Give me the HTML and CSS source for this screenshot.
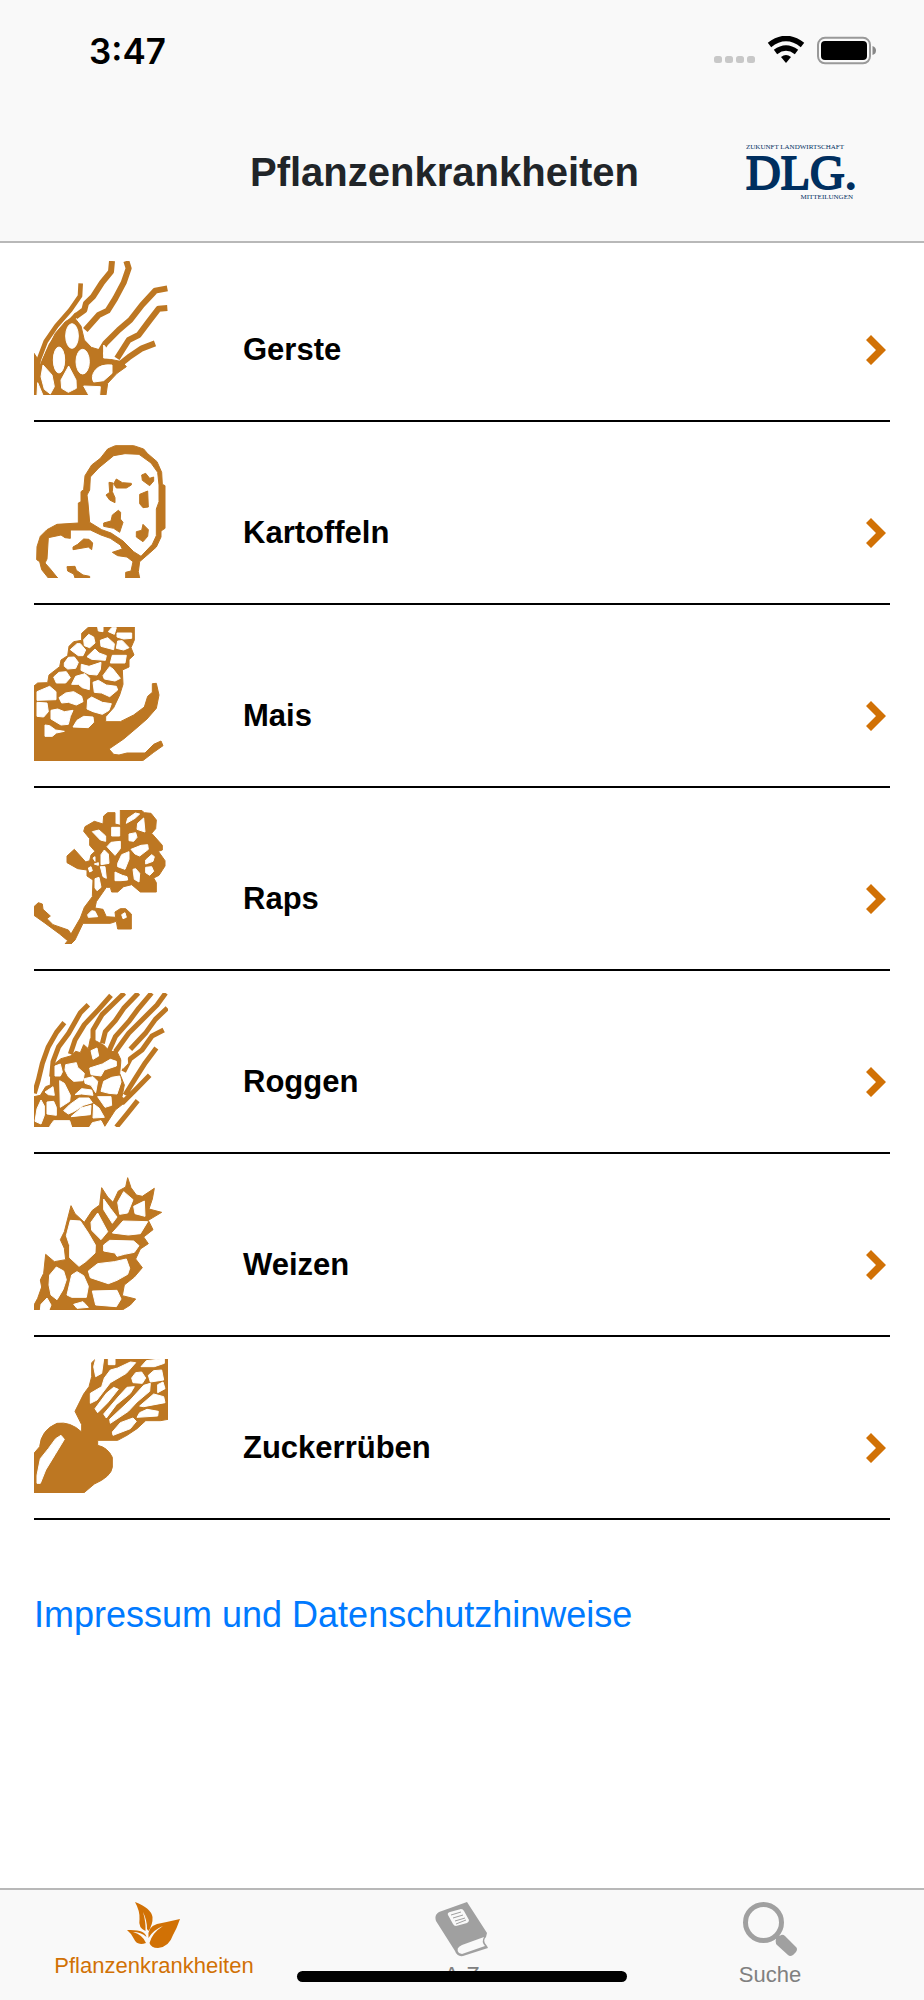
FILE: index.html
```html
<!DOCTYPE html>
<html lang="de">
<head>
<meta charset="utf-8">
<meta name="viewport" content="width=device-width, initial-scale=1">
<title>Pflanzenkrankheiten</title>
<link rel="stylesheet" href="styles.css">
</head>
<body>
<div class="app">
  <header class="header">
    <div class="status">
      <time class="clock">3:47</time>
      <svg class="status-icons" viewBox="0 0 164 30" aria-hidden="true">
        <g fill="#c8c8c8"><rect x="0" y="20" width="8" height="7" rx="2.5"/><rect x="11" y="20" width="8" height="7" rx="2.5"/><rect x="22" y="20" width="8" height="7" rx="2.5"/><rect x="33" y="20" width="8" height="7" rx="2.5"/></g>
        <g fill="none" stroke="#000" stroke-width="5.500"><path d="M55.500 9Q72 -4 88.500 9"/><path d="M61.500 16Q72 8 82.500 16"/></g>
        <path d="M67 21Q72 17 77 21L72 27Z"/>
        <rect x="104" y="1.800" width="52" height="25.500" rx="7" fill="none" stroke="#999" stroke-width="2"/>
        <rect x="107" y="5" width="46" height="19" rx="4"/>
        <path d="M158.500 10Q162 11 162 14.500Q162 18 158.500 19Z" fill="#888"/>
      </svg>
    </div>
    <div class="titlebar">
      <h1 class="title">Pflanzenkrankheiten</h1>
      <svg class="logo" viewBox="0 0 112 62" role="img" aria-label="DLG Mitteilungen">
        <text class="logo-small" x="1" y="8">ZUKUNFT LANDWIRTSCHAFT</text>
        <text class="logo-big" x="1" y="48">DLG.</text>
        <text class="logo-small" x="108" y="58" text-anchor="end">MITTEILUNGEN</text>
      </svg>
    </div>
  </header>

  <main class="content">
    <ul class="crops">
      <li><a class="crop" href="#gerste">
        <svg class="crop-icon" viewBox="41 33 402 402" aria-hidden="true">
          <g class="line">
            <path stroke-width="14" d="M181 100L179 138L150 180L108 228L76 275L55 330L46 400L70 436M170 192L120 245L92 285L70 335L58 400"/>
            <path stroke-width="18" d="M275 33L272 65L245 98L218 140L197 160L192 180L165 200M318 33L325 55L310 98L285 145L262 182L235 195L195 240M441 115L405 122L365 165L330 210L295 240L255 280L225 330M441 174L415 176L385 215L355 255L325 270L290 325M404 280L365 295L325 322L290 350"/>
          </g>
          <path class="fill" d="M160 200L182 228L192 270L213 292L240 300L255 325L305 335L318 350L290 370L262 400L257 435H41V310L48 320L58 350L80 300L105 250L135 215Z"/>
          <g class="hole"><ellipse cx="155" cy="258" rx="19" ry="37"/><ellipse cx="116" cy="330" rx="17" ry="39"/><ellipse cx="187" cy="335" rx="20" ry="37"/><path d="M145 348L167 390L168 415L144 427L124 415L122 390ZM68 345L95 375L102 410L90 432L72 418L62 380ZM52 398L68 436H50ZM225 360Q240 342 275 345L275 370L250 392L220 396Q210 380 225 360ZM190 408L240 410L238 435H205ZM250 285L262 298L285 300L275 325L250 324Z"/></g>
        </svg>
        <span class="crop-name">Gerste</span>
        <svg class="chevron" viewBox="0 0 20 30" aria-hidden="true"><path d="M5 0L20 15L5 30L0 25L10 15L0 5Z"/></svg>
      </a></li>
      <li><a class="crop" href="#kartoffeln">
        <svg class="crop-icon" viewBox="41 27 402 402" aria-hidden="true">
          <path class="fill" fill-rule="evenodd" d="M174 264V204L182 200V170L190 164L194 122L214 90L240 70L262 42L285 32H340L370 42L382 56L410 80L424 112L426 148L434 152V280L422 288V306L408 336L388 354L358 380L354 410L358 429H316V412L332 408L338 380L320 366L292 362L276 352L306 342L300 330L270 310L242 300L210 285H150V310L134 308L122 300L84 308L80 372L74 384L90 402L112 429H84L64 404L58 380L49 374L50 335L60 304L80 284L110 268ZM203 204L208 262L244 284L272 294L308 318L340 350L362 364L396 328L408 302V222L416 200V150L412 112L392 84L356 58L314 56L280 62L236 98L210 126L208 165L200 180Z"/>
          <path class="fill" d="M288 132L306 143L333 145V150L318 159H288L280 146ZM266 142L278 144L276 170L284 188V203L268 195L257 180L268 172ZM364 120L376 115L388 130L400 126V138L388 152L366 136ZM358 178L382 168L384 216L368 218L358 206ZM294 226L301 232L300 252L308 262L298 292L280 280L250 274V264L272 258L276 240ZM368 268L384 284L382 304L368 320L348 306V290L364 286ZM172 328L190 312L206 313L217 324L214 344L204 336L158 344V336ZM140 395L164 394L168 406L188 420L208 424V429H164L160 417L142 408Z"/>
        </svg>
        <span class="crop-name">Kartoffeln</span>
        <svg class="chevron" viewBox="0 0 20 30" aria-hidden="true"><path d="M5 0L20 15L5 30L0 25L10 15L0 5Z"/></svg>
      </a></li>
      <li><a class="crop" href="#mais">
        <svg class="crop-icon" viewBox="41 36 402 402" aria-hidden="true">
          <path class="fill" d="M41 213L52 204L82 203L86 180L118 155L122 135L142 122L146 94L160 80L184 76V55L205 36H342V75L332 98L341 120L326 134V156L306 165L308 208L298 240L280 278L256 305V320L300 320L340 300L372 276L382 244L396 232V206L408 205L416 240L408 280L380 312L350 338L310 372L266 402L280 418L296 420L320 414H374L400 388L422 378L428 392L400 412L366 438H41Z"/>
          <g class="hole"><path d="M50 230L88 214L107 230L107 254L50 256ZM50 262L80 264L84 290L70 306L50 304ZM100 186L116 172L138 170L150 188L136 204L108 204ZM132 144L144 127L162 126L174 142L166 160L142 162L132 154ZM150 104L170 86L180 86L196 105L188 122L174 122ZM190 74L205 58L220 66L224 84L208 98L192 92ZM232 36H248V50L234 48ZM240 76L262 68L282 86L280 104L242 94ZM292 78L306 77L326 98L310 105L288 100ZM290 66V54H334V70L310 72ZM274 38H288L282 58L264 50ZM200 125L224 102L236 114L258 122L255 136L214 133ZM270 144L276 121H318L314 144ZM183 148L206 154L242 142L240 164L230 180L206 178L182 166ZM248 182L268 155L278 162L300 190L284 198L252 192ZM166 184L194 176L208 190L207 224L186 218L174 208L154 208ZM218 202L234 196L258 210L288 214L292 225L268 245L244 234L222 232ZM116 248L136 234L160 230L184 244L188 260L168 270L144 262L124 264ZM202 254L214 246L246 262L273 266L266 286L246 298L218 290L200 282ZM92 286L112 282L132 290L158 286L150 304L144 328L122 330L92 312ZM158 336L170 316L190 304L218 306L220 322L204 338ZM74 330L88 332L106 345L132 349L108 354L96 364H74Z"/></g>
        </svg>
        <span class="crop-name">Mais</span>
        <svg class="chevron" viewBox="0 0 20 30" aria-hidden="true"><path d="M5 0L20 15L5 30L0 25L10 15L0 5Z"/></svg>
      </a></li>
      <li><a class="crop" href="#raps">
        <svg class="crop-icon" viewBox="41 30 402 402" aria-hidden="true">
          <path class="fill" d="M300 30H362L372 38L392 40L408 60L406 86L394 100L426 136V150L414 154L434 182V198L416 226L400 234L408 248V276H360L334 254L310 260L292 276H274L270 262L258 262L228 305L224 324L248 328L258 350L286 352L284 336L300 326H316L333 342V387H292L288 364L270 370H188L164 420L152 432H134L142 422L118 402L72 368L41 346V320L54 308L66 312L68 328L90 348L80 356L98 374L144 390L152 402L180 354L192 322L216 290L218 240L200 228V210L172 206L140 188V168L162 148L196 186L208 182L212 165L224 154L208 136V116L190 94L194 80L222 64L248 72L250 48L262 38H284V72L300 76Z"/>
          <g class="hole"><path d="M318 70L322 55L345 39L358 42L344 55ZM350 88L352 70L370 54L374 96ZM274 82H298V108H274ZM216 95L236 90L256 108V124L240 120ZM326 102L346 98L350 112L340 124L326 122ZM260 140L272 127L300 124L300 146L284 166ZM332 148L362 136L382 134L384 148L358 168L344 162ZM242 164L252 150L264 162L266 190L242 194ZM292 190L304 164L326 155L326 178L314 208L292 200ZM376 180L394 164L402 170L398 184L376 192ZM376 202L394 200L400 214L388 226L376 218ZM338 208L346 206L358 220L356 246L342 238ZM284 216L306 226L320 230L322 240L302 242H284ZM240 200H254L258 235L248 230ZM224 236L236 232L242 262L230 272L224 264ZM202 344L214 332L224 334L232 350L204 352ZM304 344L314 338L318 352L308 356ZM218 174L224 170V184ZM222 192L234 188V196ZM204 204L212 200L216 212L208 216Z"/></g>
        </svg>
        <span class="crop-name">Raps</span>
        <svg class="chevron" viewBox="0 0 20 30" aria-hidden="true"><path d="M5 0L20 15L5 30L0 25L10 15L0 5Z"/></svg>
      </a></li>
      <li><a class="crop" href="#roggen">
        <svg class="crop-icon" viewBox="41 39 402 402" aria-hidden="true">
          <g class="line" stroke-width="15">
            <path d="M132 128L108 158L84 200L66 250L54 300L42 340M204 74L180 98L145 160L115 200L98 245L94 290M272 46L235 88L192 134L164 180L150 222M312 39L275 75L245 104L218 150V190M354 39L310 85L285 122L255 155L246 190M394 39L355 85L325 125L285 170L265 215M436 39L410 75L365 120L325 160L285 215M441 84L405 118L375 160L330 208M430 150L395 168L365 210L330 236L310 275M408 204L375 248L345 295L314 345M388 286L350 325L305 370M352 362L320 402L288 441"/>
          </g>
          <path class="fill" d="M41 350L60 346L76 320L90 315L92 260L122 236L150 228L166 214L180 218L190 194L204 206L210 176L225 182L250 195L268 214L290 215L302 240L298 280L312 315L305 350L318 364L285 390L252 441H41Z"/>
          <g class="hole"><path d="M104 258L120 252L126 276L120 288L104 288ZM136 254L168 248L172 262L192 280L188 302L160 304L144 290L134 270ZM212 212L230 204L235 228L218 238ZM208 264L246 252L270 238L288 244V258L252 270L242 288L212 284ZM304 232L320 230L322 250L308 265ZM192 296L218 290L232 304L226 338L212 316L194 310ZM242 334L250 304L274 292L298 288L302 306L290 342L266 340ZM118 302L132 310L150 346L148 364L120 382ZM164 344L184 326L214 330L218 346L184 342ZM74 336L98 320L102 346L84 344ZM130 392L148 374L176 354H206L216 368L190 376L162 394L144 402ZM232 350L272 350L274 376L254 382ZM152 410L182 384L212 376L210 404ZM220 372L236 384L252 412L218 414ZM80 366L100 364L108 382V406L80 402ZM50 386L62 360L72 378V406L62 432L44 424ZM90 436L100 422L148 422L154 441H88ZM216 428L242 422L252 441H208Z"/></g>
        </svg>
        <span class="crop-name">Roggen</span>
        <svg class="chevron" viewBox="0 0 20 30" aria-hidden="true"><path d="M5 0L20 15L5 30L0 25L10 15L0 5Z"/></svg>
      </a></li>
      <li><a class="crop" href="#weizen">
        <svg class="crop-icon" viewBox="41 33 402 402" aria-hidden="true">
          <path class="fill" d="M41 420L52 400L64 366L60 345L70 325L76 268L102 290L136 284L132 250L120 224L132 200L152 122L164 146L192 172L216 136L238 120L244 68L262 96L278 112L294 78L316 66L322 38L332 68L348 90L366 94L402 70L396 102L386 132L424 142L384 166L398 194L370 216L384 236L360 252L346 282L366 308L342 336L312 360L306 392L346 402L330 420L306 435H41Z"/>
          <g class="hole"><path d="M292 112L310 80L338 104L322 144L298 148ZM250 102L270 130L290 156L276 175L250 134ZM340 124L372 108L374 154L344 146ZM232 144L262 200L242 224L214 196L212 172ZM150 166L180 168L204 204L225 240L224 264L196 290L176 304L148 278V242L138 212ZM276 204L308 168L382 170L360 206L324 210ZM250 240L268 226L340 228L356 242L342 262L312 268L290 274L284 264L250 258ZM204 318L232 296L282 290L318 282L328 310L322 328L290 346L264 356L210 338ZM88 330L108 306L130 318L138 344L128 374L110 404L92 390L86 360ZM154 330L170 320L190 332L204 364L198 397H154L140 390ZM216 378L290 376L302 402L288 425L226 420ZM62 418L80 399L92 420L86 435H60ZM160 418L188 410L204 427L170 430Z"/></g>
        </svg>
        <span class="crop-name">Weizen</span>
        <svg class="chevron" viewBox="0 0 20 30" aria-hidden="true"><path d="M5 0L20 15L5 30L0 25L10 15L0 5Z"/></svg>
      </a></li>
      <li><a class="crop" href="#zuckerrueben">
        <svg class="crop-icon" viewBox="41 27 402 402" aria-hidden="true">
          <path class="fill" d="M41 310L58 290Q62 240 110 220Q150 214 184 246V224L164 184L190 132L206 110L214 80V38L226 27H443V208L420 212L376 212L350 236L320 256L292 271H232V286Q262 292 276 322V352Q272 380 222 402L190 429H41Z"/>
          <g class="hole"><path d="M132 268L122 256L106 266L84 296L60 326L50 376V400H60L76 360L104 314ZM226 27H250L244 70L226 80L220 50ZM264 27H284V44H264ZM252 84L270 60L292 54L330 36L346 38L318 70L270 98L230 150L210 160V130L244 110ZM362 50L378 32L420 27H432V40L402 50ZM334 84L346 68L364 66L376 84L366 100L338 98ZM384 76L400 62L424 60L430 90L390 96ZM412 104L428 96L434 116L412 128ZM224 176L258 130L280 112L294 118L262 158L232 188ZM250 192L296 138L320 112L342 110L330 130L288 164L258 204ZM268 208L330 150L370 106L390 100L388 124L350 156L324 184L270 220ZM358 168L400 132L430 140L434 158L370 170ZM350 202L358 188L380 178L414 184L412 198ZM276 246L300 218L338 204L348 214L330 236L278 256Z"/></g>
        </svg>
        <span class="crop-name">Zuckerrüben</span>
        <svg class="chevron" viewBox="0 0 20 30" aria-hidden="true"><path d="M5 0L20 15L5 30L0 25L10 15L0 5Z"/></svg>
      </a></li>
    </ul>
    <a class="imprint" href="#impressum">Impressum und Datenschutzhinweise</a>
  </main>

  <nav class="tabs">
    <a class="tab active" href="#pflanzenkrankheiten">
      <svg class="tab-icon leaf" viewBox="0 0 54 46" aria-hidden="true">
        <path d="M8 0Q24 6 25.500 15Q26 22 21.500 29L20 27Q20 18 16 10Q19 20 18.500 29Q11 26 12.500 17Q13 9 8 0Z"/>
        <path d="M53 17Q50 26 46 33Q42 45 31 46Q24 46 22.500 41Q25 31 36 24Q26 28 21.500 36Q20 25 30 22Q40 20 53 17Z"/>
        <path d="M0 28Q18 27 19.500 35Q14 30 6 30Q16 33 19 41Q10 44 7 37Q5 32 0 28Z"/>
      </svg>
      <span>Pflanzenkrankheiten</span>
    </a>
    <a class="tab" href="#a-z">
      <svg class="tab-icon" viewBox="0 0 54 55" aria-hidden="true">
        <path d="M32 0L52 31L51 35Q47 39 52 44L53 46L28 54Q22 55 20 49L1 19Q-1 13 4 10Z"/>
        <path class="paper" d="M49 35L27 43Q20 46 24 51L27 52L50 44Q46 40 49 35ZM13 13Q12 11 15 10L26 7Q28 7 29 9L34 18Q34 20 32 21L21 24Q19 24 18 22Z"/>
        <path class="ruling" d="M16 13L26 10M18 16L28 13M20 19L30 16M21 22L31 18"/>
      </svg>
      <span>A-Z</span>
    </a>
    <a class="tab" href="#suche">
      <svg class="tab-icon" viewBox="0 0 54 55" aria-hidden="true">
        <circle cx="20.500" cy="20.500" r="18" fill="none" stroke="currentColor" stroke-width="5"/>
        <path d="M33 37L38 33Q40 32 42 34L53 45Q55 47 53 50L50 53Q47 55 45 53L34 43Q32 41 33 37L31 36L35 32L37 34Z"/>
      </svg>
      <span>Suche</span>
    </a>
    <div class="home-indicator"></div>
  </nav>
</div>
</body>
</html>
```
FILE: styles.css
```css
* {
  box-sizing: border-box;
}

body {
  margin: 0;
  background: #fff;
  color: #000;
  font-family: "Liberation Sans", Arial, sans-serif;
}

a {
  text-decoration: none;
}

.app {
  display: flex;
  flex-direction: column;
  min-height: 100vh;
}

.header {
  background: #f9f9f9;
  border-bottom: 2px solid #b8b8b8;
}

.status {
  display: flex;
  justify-content: space-between;
  align-items: center;
  height: 102px;
  padding: 0 46px 0 89px;
}

.clock {
  font: 600 35px/40px Inter, sans-serif;
}

.status-icons {
  width: 164px;
  height: 30px;
}

.titlebar {
  display: flex;
  align-items: center;
  justify-content: flex-end;
  gap: 106px;
  height: 139px;
  padding: 0 67px 0 32px;
}

.title {
  margin: 0;
  color: #212529;
  font-size: 40px;
  line-height: 48px;
}

.logo {
  width: 112px;
  height: 62px;
  overflow: visible;
  fill: #002f5f;
  font-family: "Liberation Serif", serif;
}

.logo-small {
  font-size: 7px;
}

.logo-big {
  font-size: 48px;
  stroke: #002f5f;
  stroke-width: 2px;
}

.content {
  flex: 1;
  padding: 18px 34px 40px;
}

.crops {
  display: grid;
  gap: 22px;
  margin: 0 0 75px;
  padding: 0;
  list-style: none;
}

.crop {
  display: flex;
  align-items: center;
  padding-bottom: 25px;
  border-bottom: 2px solid #000;
  color: #000;
}

.crop-icon {
  flex: none;
  width: 134px;
  height: 134px;
  margin-right: 75px;
}

.fill {
  fill: #bd7722;
  stroke: #bd7722;
  stroke-width: 3px;
  stroke-linejoin: round;
}

.line {
  fill: none;
  stroke: #bd7722;
  stroke-linejoin: round;
}

.hole {
  fill: #fff;
  stroke: #fff;
  stroke-width: 3px;
  stroke-linejoin: round;
}

.crop-name {
  flex: 1;
  padding-top: 43px;
  font-size: 31px;
  font-weight: bold;
  line-height: 36px;
}

.chevron {
  width: 20px;
  height: 30px;
  margin: 43px 4px 0 0;
  fill: #d17105;
}

.imprint {
  display: inline-block;
  color: #007aff;
  font-size: 36px;
  line-height: 40px;
}

.tabs {
  position: relative;
  display: grid;
  grid-template-columns: repeat(3, 1fr);
  height: 112px;
  border-top: 2px solid #b8b8b8;
  background: #f9f9f9;
}

.tab {
  display: flex;
  flex-direction: column;
  align-items: center;
  gap: 6px;
  padding-top: 12px;
  color: #808080;
  font-size: 22px;
  line-height: 24px;
}

.active {
  color: #d17105;
}

.tab-icon {
  width: 54px;
  height: 55px;
  color: #a0a0a0;
  fill: currentColor;
}

.leaf {
  height: 46px;
  color: #d17105;
}

.paper {
  fill: #f9f9f9;
}

.ruling {
  fill: none;
  stroke: #a0a0a0;
  stroke-width: 1px;
}

.home-indicator {
  position: absolute;
  bottom: 18px;
  left: 50%;
  width: 330px;
  height: 11px;
  margin-left: -165px;
  border-radius: 6px;
  background: #000;
}
```
